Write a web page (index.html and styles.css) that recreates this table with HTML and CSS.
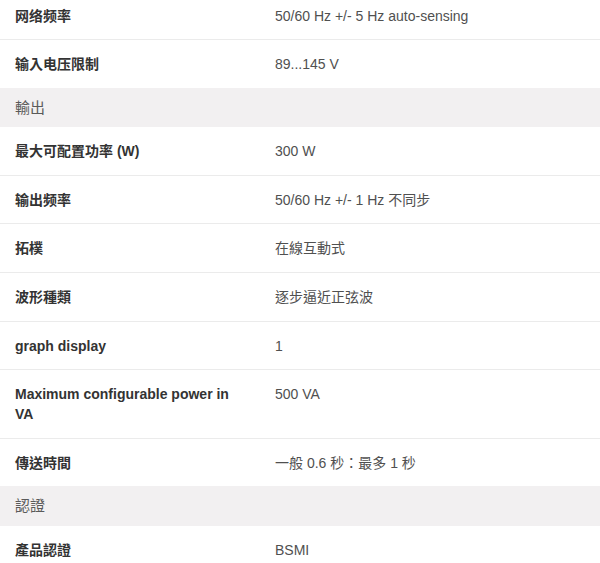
FILE: index.html
```html
<!DOCTYPE html>
<html lang="zh-Hant">
<head>
<meta charset="utf-8">
<title>Specifications</title>
<link rel="stylesheet" href="styles.css">
</head>
<body>
<div class="specs">
  <div class="row"><div class="label">网络频率</div><div class="value">50/60 Hz +/- 5 Hz auto-sensing</div></div>
  <div class="row"><div class="label">输入电压限制</div><div class="value">89...145 V</div></div>
  <div class="section">輸出</div>
  <div class="row"><div class="label">最大可配置功率 (W)</div><div class="value">300 W</div></div>
  <div class="row"><div class="label">输出频率</div><div class="value">50/60 Hz +/- 1 Hz 不同步</div></div>
  <div class="row"><div class="label">拓樸</div><div class="value">在線互動式</div></div>
  <div class="row"><div class="label">波形種類</div><div class="value">逐步逼近正弦波</div></div>
  <div class="row"><div class="label">graph display</div><div class="value">1</div></div>
  <div class="row"><div class="label">Maximum configurable power in VA</div><div class="value">500 VA</div></div>
  <div class="row"><div class="label">傳送時間</div><div class="value">一般 0.6 秒：最多 1 秒</div></div>
  <div class="section">認證</div>
  <div class="row"><div class="label">產品認證</div><div class="value">BSMI</div></div>
</div>
</body>
</html>
```
FILE: styles.css
```css
html, body {
  margin: 0;
  padding: 0;
  background: #ffffff;
}
body {
  font-family: "Liberation Sans", Arial, "Noto Sans CJK TC", sans-serif;
  font-size: 14px;
  line-height: 20px;
  overflow: hidden;
}
.specs {
  margin-top: -8.5px;
}
.row {
  display: grid;
  grid-template-columns: 260px 1fr;
  border-bottom: 1px solid #ebebeb;
}
.label {
  padding: 14px 15px 13.6px 15px;
  font-weight: bold;
  color: #333333;
}
.value {
  padding: 14px 15px 13.6px 15px;
  color: #505050;
}
.section {
  background: #f2f0f1;
  padding: 10px 15px 9.5px 15px;
  color: #5a5a5a;
  font-size: 15px;
  margin-top: -1px;
}
```
